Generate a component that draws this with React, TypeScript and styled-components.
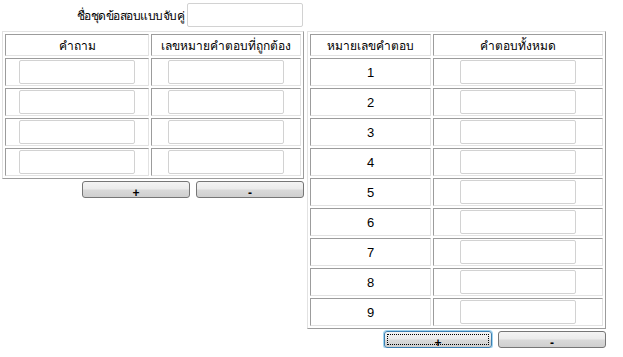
import React from "react";
import styled, { createGlobalStyle, css } from "styled-components";

const GlobalStyle = createGlobalStyle`
  body {
    margin: 0;
    background: #ffffff;
    font-family: Tahoma, "DejaVu Sans", "Noto Sans", sans-serif;
    font-size: 13px;
    color: #000;
  }
`;

const Page = styled.div`
  padding: 3px 0 0 2px;
  display: flex;
  flex-direction: column;
  gap: 4px;
`;

const NameRow = styled.div`
  width: 301px;
  display: flex;
  justify-content: flex-end;
  align-items: center;
  gap: 3px;
`;

const Label = styled.span`
  font-size: 12px;
  letter-spacing: -0.5px;
  white-space: nowrap;
`;

const Columns = styled.div`
  display: flex;
  align-items: flex-start;
  gap: 3px;
`;

const Column = styled.div<{ $width: number }>`
  width: ${(p) => p.$width}px;
  flex: none;
  display: flex;
  flex-direction: column;
  gap: 2px;
`;

const Table = styled.table`
  border-collapse: separate;
  border-spacing: 2px;
  border: 1px solid;
  border-color: #e2e2e2 #9c9c9c #9c9c9c #e2e2e2;
  width: 100%;
  table-layout: fixed;
`;

const Cell = styled.td<{ $height: number }>`
  border: 1px solid;
  border-color: #9c9c9c #e2e2e2 #e2e2e2 #9c9c9c;
  padding: 0;
  height: ${(p) => p.$height - 2}px;
  text-align: center;
  vertical-align: middle;
  font-size: 13px;
  white-space: nowrap;
  overflow: hidden;
`;

const HeadCell = styled(Cell).attrs({ as: "th" })<{ $width: number }>`
  width: ${(p) => p.$width - 2}px;
  font-weight: normal;
  font-size: 12px;
`;

const TextBox = styled.input.attrs({ type: "text" })<{ $inline?: boolean }>`
  box-sizing: border-box;
  width: 116px;
  height: 24px;
  border: 1px solid #d2d2d2;
  border-radius: 2px;
  background: #fff;
  display: block;
  margin: ${(p) => (p.$inline ? "0" : "0 auto")};
  outline: none;
  flex: none;
`;

const ButtonRow = styled.div`
  display: flex;
  justify-content: flex-end;
  gap: 6px;
`;

const Button = styled.button<{ $focused?: boolean }>`
  box-sizing: border-box;
  width: 108px;
  height: 17px;
  padding: 6px 0 0;
  border: 1px solid #767676;
  border-radius: 3px;
  background: linear-gradient(#f4f4f4 0%, #ebebeb 45%, #d9d9d9 55%, #cfcfcf 100%);
  font-family: "Liberation Sans", Arial, sans-serif;
  font-size: 12px;
  font-weight: bold;
  line-height: 10px;
  color: #000;
  ${(p) =>
    p.$focused &&
    css`
      border-color: #3c7fb1;
      box-shadow: 0 0 0 1px #9fd4f0;
      outline: 1px dotted #000;
      outline-offset: -4px;
    `}
`;

const Num = styled.span`
  font-family: "Liberation Sans", Arial, sans-serif;
  font-size: 13px;
`;

const questions = [1, 2, 3, 4];
const answers = [1, 2, 3, 4, 5, 6, 7, 8, 9];

export default function App() {
  return (
    <Page>
      <GlobalStyle />
      <NameRow>
        <Label>ชื่อชุดข้อสอบแบบจับคู่</Label>
        <TextBox $inline />
      </NameRow>
      <Columns>
        <Column $width={302}>
          <Table>
            <tbody>
              <tr>
                <HeadCell $width={144} $height={22}>คำถาม</HeadCell>
                <HeadCell $width={150} $height={22}>เลขหมายคำตอบที่ถูกต้อง</HeadCell>
              </tr>
              {questions.map((q) => (
                <tr key={q}>
                  <Cell $height={28}><TextBox /></Cell>
                  <Cell $height={28}><TextBox /></Cell>
                </tr>
              ))}
            </tbody>
          </Table>
          <ButtonRow>
            <Button>+</Button>
            <Button>-</Button>
          </ButtonRow>
        </Column>
        <Column $width={299}>
          <Table>
            <tbody>
              <tr>
                <HeadCell $width={121} $height={22}>หมายเลขคำตอบ</HeadCell>
                <HeadCell $width={170} $height={22}>คำตอบทั้งหมด</HeadCell>
              </tr>
              {answers.map((a) => (
                <tr key={a}>
                  <Cell $height={28}><Num>{a}</Num></Cell>
                  <Cell $height={28}><TextBox /></Cell>
                </tr>
              ))}
            </tbody>
          </Table>
          <ButtonRow>
            <Button $focused>+</Button>
            <Button>-</Button>
          </ButtonRow>
        </Column>
      </Columns>
    </Page>
  );
}
